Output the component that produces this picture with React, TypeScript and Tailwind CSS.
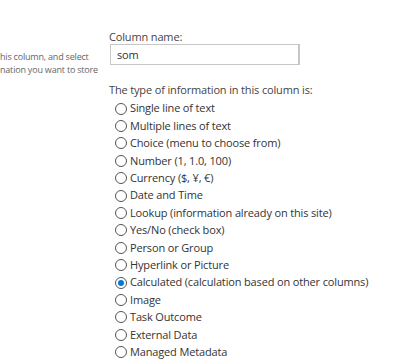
import React from "react";

const TYPES = [
  "Single line of text",
  "Multiple lines of text",
  "Choice (menu to choose from)",
  "Number (1, 1.0, 100)",
  "Currency ($, ¥, €)",
  "Date and Time",
  "Lookup (information already on this site)",
  "Yes/No (check box)",
  "Person or Group",
  "Hyperlink or Picture",
  "Calculated (calculation based on other columns)",
  "Image",
  "Task Outcome",
  "External Data",
  "Managed Metadata",
];

const Radio: React.FC<{ checked?: boolean }> = ({ checked }) => (
  <span className="w-[12px] h-[12px] rounded-full border border-[#555] flex items-center justify-center shrink-0 bg-white">
    {checked && <span className="w-[6px] h-[6px] rounded-full bg-[#0078d4]" />}
  </span>
);

const App: React.FC<{}> = () => {
  const [selected, setSelected] = React.useState<number>(10);

  return (
    <div
      className="w-[400px] h-[362px] bg-white overflow-hidden flex"
      style={{ fontFamily: '"Open Sans", "Noto Sans", sans-serif' }}
    >
      <div className="w-[109px] shrink-0 pt-[50px] text-[9px] tracking-[-0.2px] leading-[13px] text-[#666] whitespace-nowrap overflow-hidden">
        <div>his column, and select</div>
        <div>nation you want to store</div>
      </div>
      <div className="pt-[28px] text-[11px] tracking-[-0.15px] text-[#333]">
        <div className="leading-[17px] text-[#444]">Column name:</div>
        <div className="mt-[-1px] w-[190px] h-[21px] border border-[#c6c6c6] border-r-2 px-[6px] text-[#333] leading-[19px] ml-[1px]">
          som
        </div>
        <div className="mt-[16px] leading-[17px] text-[#444]">
          The type of information in this column is:
        </div>
        <div className="mt-[2px] pl-[6px] flex flex-col">
          {TYPES.map((type, index) => (
            <div
              key={type}
              className="flex items-center gap-[3px] h-[17.4px] cursor-pointer"
              onClick={() => setSelected(index)}
            >
              <Radio checked={selected === index} />
              <span className="whitespace-nowrap">{type}</span>
            </div>
          ))}
        </div>
      </div>
    </div>
  );
};

export default App;
